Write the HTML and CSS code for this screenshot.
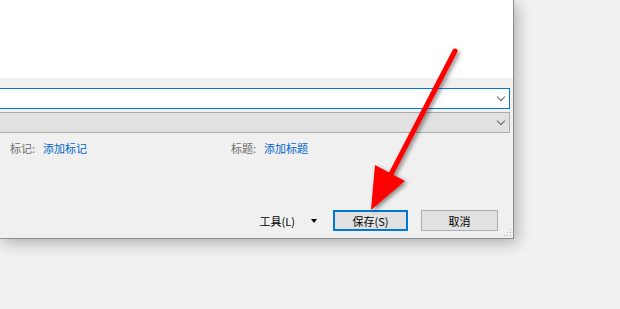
FILE: index.html
```html
<!DOCTYPE html>
<html lang="zh-CN">
<head>
    <meta charset="UTF-8">
    <meta name="viewport" content="width=device-width, initial-scale=1.0">
    <title>保存</title>
    <link rel="stylesheet" href="styles.css">
</head>
<body>
    <div class="screen">
        <div class="dialog">
            <div class="preview"></div>

            <div class="fields">
                <div class="combo combo_name">
                    <span class="chev"></span>
                </div>
                <div class="combo combo_type">
                    <span class="chev"></span>
                </div>
            </div>

            <div class="meta">
                <div class="meta_item">
                    <span class="label">标记:</span>
                    <a class="link">添加标记</a>
                </div>
                <div class="meta_item">
                    <span class="label">标题:</span>
                    <a class="link">添加标题</a>
                </div>
            </div>

            <div class="actions">
                <span class="tools">工具(L)</span>
                <span class="caret"></span>
                <button class="btn btn_primary">保存(S)</button>
                <button class="btn">取消</button>
            </div>

            <span class="grip"></span>
        </div>

        <!-- red pointer drawn over the dialog -->
        <svg class="arrow" width="620" height="309" viewBox="0 0 620 309">
            <defs>
                <filter id="shade" x="-20%" y="-20%" width="140%" height="140%">
                    <feDropShadow dx="2" dy="2" stdDeviation="2" flood-color="#000" flood-opacity="0.45"/>
                </filter>
            </defs>
            <g filter="url(#shade)">
                <line x1="455" y1="51" x2="389" y2="178" stroke="#ff0000" stroke-width="5" stroke-linecap="round"/>
                <polygon points="375,165 405,181 371,210" fill="#ff0000"/>
            </g>
        </svg>
    </div>
</body>
</html>
```

FILE: styles.css
```css
* {
    margin: 0;
    padding: 0;
    box-sizing: border-box;
}

body {
    background-color: #f1f1f1;
    font-family: "Noto Sans CJK SC", "Noto Sans", sans-serif;
    font-size: 11px;
    overflow: hidden;
}

.screen {
    position: relative;
    width: 620px;
    height: 309px;
}

.dialog {
    position: relative;
    width: 514px;
    height: 239px;
    background-color: #f0f0f0;
    border-right: 1px solid #8e8e8e;
    border-bottom: 1px solid #8e8e8e;
    box-shadow: 3px 4px 14px rgba(0, 0, 0, 0.28);
}

.preview {
    height: 78px;
    background-color: #ffffff;
}

.fields {
    display: flex;
    flex-direction: column;
    gap: 3px;
    padding-top: 10px;
    width: 510px;
}

.combo {
    position: relative;
    height: 21px;
}

.combo_name {
    background-color: #ffffff;
    border: 1px solid #0078d7;
    border-left: none;
}

.combo_type {
    background-color: #e1e1e1;
    border: 1px solid #adadad;
    border-left: none;
}

.chev {
    position: absolute;
    right: 5px;
    top: 5px;
    width: 6px;
    height: 6px;
    border-right: 1px solid #606060;
    border-bottom: 1px solid #606060;
    transform: rotate(45deg);
}

.meta {
    display: grid;
    grid-template-columns: 221px auto;
    padding-left: 10px;
    margin-top: 6px;
    height: 18px;
    line-height: 18px;
}

.meta_item {
    display: flex;
    gap: 8px;
}

.label {
    color: #6d6d6d;
}

.link {
    color: #0066cc;
}

.actions {
    display: flex;
    justify-content: flex-end;
    align-items: center;
    padding-right: 15px;
    margin-top: 53px;
    height: 21px;
}

.tools {
    color: #000000;
    margin-right: 16px;
}

.caret {
    width: 0;
    height: 0;
    border-left: 3px solid transparent;
    border-right: 3px solid transparent;
    border-top: 4px solid #000000;
    margin-right: 16px;
}

.btn {
    width: 77px;
    height: 21px;
    background-color: #e1e1e1;
    border: 1px solid #adadad;
    font-family: inherit;
    font-size: 11px;
    color: #000000;
}

.btn_primary {
    width: 75px;
    border: 2px solid #0078d7;
    margin-right: 13px;
}

.grip {
    position: absolute;
    right: 2px;
    bottom: 2px;
    width: 8px;
    height: 8px;
    background-image: radial-gradient(circle, #b5b5b5 1px, transparent 1px);
    background-size: 3px 3px;
    clip-path: polygon(100% 0, 100% 100%, 0 100%);
}

.arrow {
    position: absolute;
    top: 0;
    left: 0;
}
```
